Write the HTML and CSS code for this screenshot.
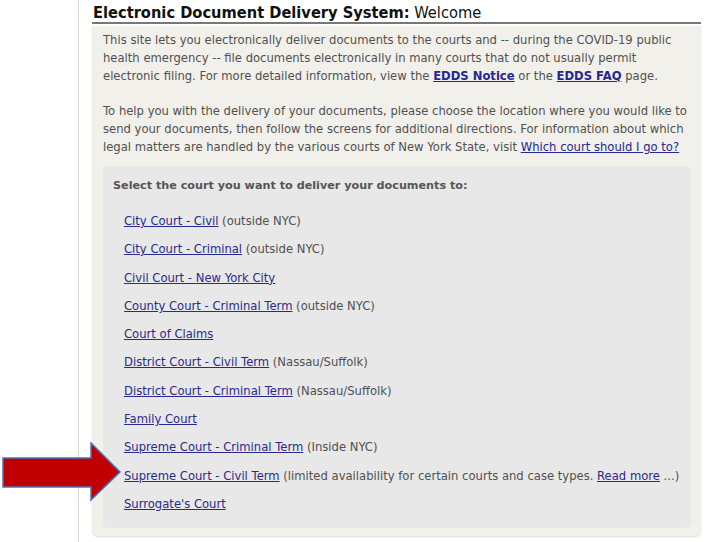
FILE: index.html
```html
<!DOCTYPE html>
<html>
<head>
<meta charset="utf-8">
<link rel="stylesheet" href="styles.css">
</head>
<body>
<div class="page">
  <div class="main">
    <h1 class="title"><span class="title-bold">Electronic Document Delivery System:</span> Welcome</h1>
    <div class="outer">
      <p class="intro">This site lets you electronically deliver documents to the courts and -- during the COVID-19 public<br>health emergency -- file documents electronically in many courts that do not usually permit<br>electronic filing. For more detailed information, view the <a class="strong-link" href="#">EDDS Notice</a> or the <a class="strong-link" href="#">EDDS FAQ</a> page.</p>
      <p class="intro intro-last">To help you with the delivery of your documents, please choose the location where you would like to<br>send your documents, then follow the screens for additional directions. For information about which<br>legal matters are handled by the various courts of New York State, visit <a href="#">Which court should I go to?</a></p>
      <div class="inner">
        <div class="select-head">Select the court you want to deliver your documents to:</div>
        <ul class="courts">
          <li><a href="#">City Court - Civil</a> (outside NYC)</li>
          <li><a href="#">City Court - Criminal</a> (outside NYC)</li>
          <li><a href="#">Civil Court - New York City</a></li>
          <li><a href="#">County Court - Criminal Term</a> (outside NYC)</li>
          <li><a href="#">Court of Claims</a></li>
          <li><a href="#">District Court - Civil Term</a> (Nassau/Suffolk)</li>
          <li><a href="#">District Court - Criminal Term</a> (Nassau/Suffolk)</li>
          <li><a href="#">Family Court</a></li>
          <li><a href="#">Supreme Court - Criminal Term</a> (Inside NYC)</li>
          <li><a href="#">Supreme Court - Civil Term</a> (limited availability for certain courts and case types. <a href="#">Read more</a> ...)</li>
          <li><a href="#">Surrogate's Court</a></li>
        </ul>
      </div>
    </div>
  </div>
  <svg class="arrow" width="124" height="62" viewBox="0 0 124 62">
    <polygon points="3,16 91,16 91,1 120,30 91,58 91,45 3,45" fill="#c00000" stroke="#4a72c4" stroke-width="1.5"/>
  </svg>
</div>
</body>
</html>
```
FILE: styles.css
```css
html, body {
  margin: 0;
  padding: 0;
  background: #ffffff;
}
body {
  font-family: "DejaVu Sans", Verdana, sans-serif;
  font-size: 11.6px;
  color: #505050;
}
.page {
  position: relative;
  width: 709px;
  height: 542px;
  overflow: hidden;
}
.main {
  margin-left: 78px;
  border-left: 1px solid #dcd8cc;
  height: 542px;
  padding-left: 13px;
  padding-top: 3px;
  width: 609px;
}
.title {
  margin: 0;
  font-family: "DejaVu Sans Condensed", "DejaVu Sans", sans-serif;
  font-size: 16.3px;
  font-weight: normal;
  color: #111111;
  line-height: 19px;
  border-bottom: 2px solid #777777;
  padding-left: 1px;
}
.title-bold {
  font-weight: bold;
}
.outer {
  background: #f2f0eb;
  border-radius: 0 0 6px 6px;
  margin-top: 2px;
  padding: 5px 10px 8px 11px;
  box-shadow: 0 1px 2px #e2ded4;
}
.intro {
  margin: 0 -10px 17px 0;
  line-height: 18px;
  white-space: nowrap;
}
.intro-last {
  margin-bottom: 10px;
}
.intro a {
  color: #27278f;
}
.strong-link {
  font-weight: bold;
}
.inner {
  background: #e8e8e8;
  border-radius: 5px;
  padding: 11px 10px 5px 10px;
}
.select-head {
  font-weight: bold;
  font-size: 11.2px;
  color: #555555;
  line-height: 18px;
}
.courts {
  list-style: none;
  margin: 17px 0 0 0;
  padding: 0 0 0 11px;
}
.courts li {
  line-height: 18px;
  margin-bottom: 10.3px;
}
.courts a {
  color: #2a2a8c;
}
.arrow {
  position: absolute;
  left: 0;
  top: 442px;
}
```
